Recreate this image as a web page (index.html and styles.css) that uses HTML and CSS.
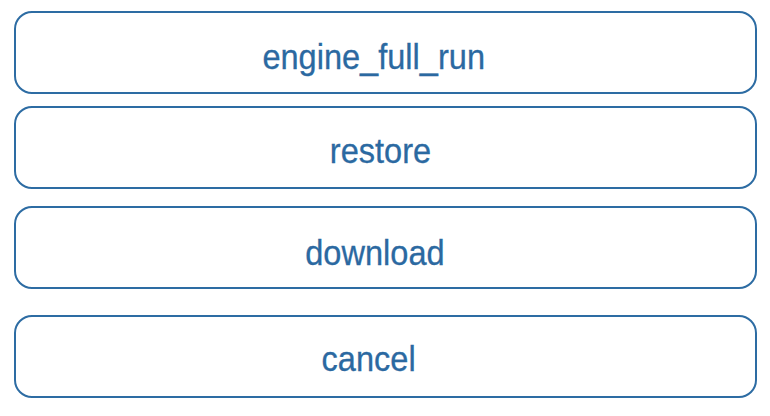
FILE: index.html
```html
<!DOCTYPE html>
<html>
<head>
<meta charset="utf-8">
<link rel="stylesheet" href="styles.css">
</head>
<body>
<div class="menu">
  <button class="btn"><span class="label">engine_full_run</span></button>
  <button class="btn btn-2"><span class="label">restore</span></button>
  <button class="btn btn-3"><span class="label">download</span></button>
  <button class="btn btn-4"><span class="label">cancel</span></button>
</div>
</body>
</html>
```
FILE: styles.css
```css
html, body {
  margin: 0;
  padding: 0;
  background: #ffffff;
}
.menu {
  display: flex;
  flex-direction: column;
  padding: 11px 13px 0 14px;
}
.btn {
  box-sizing: border-box;
  height: 83px;
  width: 743px;
  margin: 0;
  padding: 8px 24px 0 0;
  border: 2px solid #2d6ca3;
  border-radius: 18px;
  background: #ffffff;
  color: #2b69a1;
  font-family: "Liberation Sans", Arial, sans-serif;
  font-size: 35px;
  line-height: 1;
  display: flex;
  align-items: center;
  justify-content: center;
}
.label {
  display: inline-block;
  transform: scaleX(0.93);
  -webkit-text-stroke: 0.3px #2b69a1;
}
.btn-2 { margin-top: 12px; padding-top: 6px; padding-right: 10px; }
.btn-3 { margin-top: 17px; padding-top: 10px; padding-right: 22px; }
.btn-4 { margin-top: 26px; padding-top: 4px; padding-right: 34px; }
```
